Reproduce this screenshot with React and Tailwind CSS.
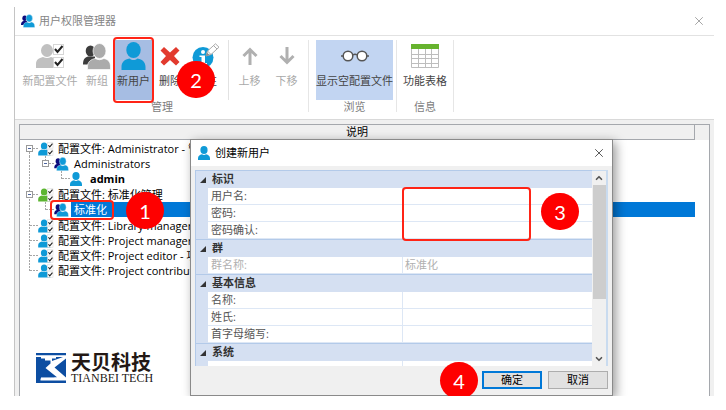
import React from "react";
import { X, ChevronUp, ChevronDown } from "lucide-react";

const BLUE = "#0f9ad7";
const NAVY = "#0b0b7c";

const BODY =
  "M0 28V25C0 20 3 17.500 8 16.500C9.500 17.500 10.500 18 12 18S14.500 17.500 16 16.500C21 17.500 24 20 24 25V28Z";

function Person({ color = BLUE, className }) {
  return (
    <svg viewBox="0 0 24 28" className={className} fill={color} aria-hidden="true">
      <ellipse cx="12" cy="8" rx="7.200" ry="8" />
      <path d={BODY} />
    </svg>
  );
}

function People({ back = NAVY, front = BLUE, className }) {
  return (
    <svg viewBox="0 0 28 27" className={className} aria-hidden="true">
      <g fill={back}>
        <ellipse cx="7.500" cy="8" rx="4.800" ry="5.500" />
        <path d="M0 21.500C0 16.500 1.500 14.500 5 13.500H12V21.500Z" />
      </g>
      <g fill={front} stroke="#fff" strokeWidth="0.700">
        <path d="M4.500 26.500V24C4.500 18.500 8 16.500 12 15.500Q16.500 18 21 15.500C25 16.500 27.500 18.500 27.500 24V26.500Z" />
        <ellipse cx="16.500" cy="8" rx="6.500" ry="7.500" />
      </g>
    </svg>
  );
}

function Profile({ color = BLUE, className }) {
  return (
    <svg viewBox="0 0 29 26" className={className} aria-hidden="true">
      <g fill={color}>
        <ellipse cx="11" cy="7.500" rx="6" ry="6.500" />
        <path d="M0 25V21C0 16.500 3 15 7 14Q11 16 15 14C19 15 23 16.500 23 21V25Z" />
      </g>
      <g fill="#fff" stroke="#d6d6d6">
        <rect x="17.500" y="1.500" width="10" height="10" />
        <rect x="17.500" y="14.500" width="10" height="10" />
      </g>
      <g fill="none" stroke="#222" strokeWidth="2">
        <path d="M19 6L21.500 9L26.500 3M19 19L21.500 22L26.500 16" />
      </g>
    </svg>
  );
}

function DeleteIcon() {
  return (
    <svg viewBox="0 0 20 20" className="h-5 w-5" aria-hidden="true">
      <path d="M4 1L10 6.500L16 1L19.500 4.500L14 10L19.500 16L16 19.500L10 14L4 19.500L0.500 16L6 10L0.500 4.500Z" fill="#e23a2e" />
    </svg>
  );
}

function InfoIcon() {
  return (
    <svg viewBox="0 0 28 26" className="h-[26px] w-7 shrink-0" aria-hidden="true">
      <circle cx="11" cy="14.500" r="10.500" fill={BLUE} />
      <circle cx="11" cy="9" r="2" fill="#fff" />
      <path d="M7.500 12.500H13V20H15V21.500H7.500V20H9.500V14H7.500Z" fill="#fff" />
      <path d="M14 13L15.500 8L23.500 0.800L27 4.200L19 11.500Z" fill="#fff" stroke="#aaa" />
      <path d="M14 13L15 9.500L17.500 12Z" fill="#888" />
      <path d="M21.500 2.500L25 6M15.500 8L19 11.500" stroke="#aaa" />
    </svg>
  );
}

function ArrowIcon({ down }) {
  return (
    <svg viewBox="0 0 16 18" className="h-[18px] w-4" fill="none" stroke="#b0b0b0" strokeWidth="3" aria-hidden="true">
      {down ? <path d="M8 0V15M1.500 9L8 15.500L14.500 9" /> : <path d="M8 18V3M1.500 9L8 2.500L14.500 9" />}
    </svg>
  );
}

function GlassesIcon() {
  return (
    <svg viewBox="0 0 28 12" className="h-3 w-7" fill="none" stroke="#555" strokeWidth="1.500" aria-hidden="true">
      <circle cx="7" cy="6" r="4.800" fill="#fff" />
      <circle cx="21" cy="6" r="4.800" fill="#fff" />
      <path d="M12 5Q14 3.500 16 5M2 6H0M26 6H28" />
    </svg>
  );
}

function TableIcon() {
  return (
    <svg viewBox="0 0 28 24" className="h-6 w-7" aria-hidden="true">
      <rect width="28" height="24" fill="#fff" />
      <path d="M0.500 5V23.500H27.500V5M0 10.500H28M0 14.500H28M0 19.500H28M7.500 5V24M14.500 5V24M20.500 5V24" fill="none" stroke="#bdbdbd" />
      <rect width="28" height="5" fill="#66b32e" />
    </svg>
  );
}

function Badge({ n, className }) {
  return (
    <span
      className={`absolute z-20 flex h-[37px] w-[38px] items-center justify-center rounded-full bg-[#fe0000] font-[Lato,sans-serif] text-[20px] leading-none font-normal text-white ${className}`}
    >
      {n}
    </span>
  );
}

function Highlight({ className }) {
  return <span className={`pointer-events-none absolute z-10 rounded-sm border-2 border-[#ff2416] ${className}`} />;
}

function Tool({ icon, label, className = "", text = "text-[#a9a9a9]", children }) {
  return (
    <button type="button" className={`relative flex h-[60px] flex-col items-center ${text} ${className}`}>
      <span className="flex h-8 items-center justify-center">{icon}</span>
      <span className="leading-[18px] whitespace-nowrap">{label}</span>
      {children}
    </button>
  );
}

function ToolGroup({ label, className = "", children }) {
  return (
    <div className={`flex flex-col items-center ${className}`}>
      <div className="flex">{children}</div>
      <span className="leading-[14px] text-[#7d7d7d]">{label}</span>
    </div>
  );
}

function Divider() {
  return <div className="h-[72px] w-px bg-[#e6e6e6]" />;
}

const LINES = {
  first: "M7.500 8V15M11 7.500H16",
  box: "M7.500 0V15M11 7.500H16",
  open: "M7.500 0V4M11 7.500H16",
  trunk: "M7.500 0V15",
  tee: "M7.500 0V15M8 7.500H16",
  end: "M7.500 0V8M8 7.500H16",
};

function Branch({ kind }) {
  const expandable = kind === "first" || kind === "box" || kind === "open";
  return (
    <svg viewBox="0 0 16 15" className="h-[15px] w-4 shrink-0" fill="none" stroke="#a5a5a5" aria-hidden="true">
      <path d={LINES[kind]} strokeDasharray="2 1" />
      {expandable && (
        <>
          <rect x="4.500" y="4.500" width="6" height="6" fill="#fff" stroke="#9a9a9a" />
          <path d="M6 7.500H9" stroke="#4c64a0" />
        </>
      )}
    </svg>
  );
}

function TreeRow({ gutter, icon, label, selected, bold, children }) {
  return (
    <li className="relative flex h-[15px] items-center">
      {gutter.map((k, i) => (k ? <Branch key={i} kind={k} /> : <span key={i} className="w-4 shrink-0" />))}
      <span className="flex w-[17px] shrink-0">{icon}</span>
      <span
        className={`h-[15px] pl-[3px] leading-[15px] whitespace-nowrap ${bold ? "font-bold" : ""} ${
          selected ? "flex-1 bg-[#0078d7] text-white" : ""
        }`}
      >
        {label}
      </span>
      {children}
    </li>
  );
}

const profileIcon = <Profile className="h-3.5 w-4" />;
const peopleIcon = <People className="h-3.5 w-[15px]" />;

function ProfileTree() {
  return (
    <div className="flex flex-col gap-px pt-px pl-0.5 text-black">
      <ul>
        <TreeRow gutter={["first"]} icon={profileIcon} label="配置文件: Administrator - 管" />
        <TreeRow gutter={["trunk", "open"]} icon={peopleIcon} label="Administrators" />
        <TreeRow gutter={["trunk", "", "end"]} icon={<Person className="h-3.5 w-3" />} label="admin" bold />
      </ul>
      <ul>
        <TreeRow
          gutter={["box"]}
          icon={<Profile color="#5cb531" className="h-3.5 w-4" />}
          label="配置文件: 标准化管理"
        />
        <TreeRow gutter={["trunk", "end"]} icon={peopleIcon} label="标准化" selected>
          <Highlight className="-top-0.5 left-7 h-5 w-[64px]" />
          <Badge n="1" className="-top-2.5 left-[104px]" />
        </TreeRow>
      </ul>
      <ul>
        <TreeRow gutter={["tee"]} icon={profileIcon} label="配置文件: Library manager" />
        <TreeRow gutter={["tee"]} icon={profileIcon} label="配置文件: Project manager" />
        <TreeRow gutter={["tee"]} icon={profileIcon} label="配置文件: Project editor - 项" />
        <TreeRow gutter={["end"]} icon={profileIcon} label="配置文件: Project contribut" />
      </ul>
    </div>
  );
}

function Logo() {
  return (
    <div className="mt-auto mb-3 flex items-center gap-[5px] pl-4 text-[#231815]">
      <svg viewBox="0 0 30 30" className="h-[30px] w-[30px]" role="img" aria-label="天贝科技">
        <path d="M0 0H30V2.200H0ZM0 4H30V25.500H0ZM0 25H4.500V30H0ZM0 27.500H30V30H0Z" fill="#0d4ea2" />
        <path d="M5 4H20V5.500H16V8L27 4H30V5.500L18.500 14.500L30 24.500V26H5V24.200H21L9.500 15L14.500 10.500V7.500H9V5.500H5Z" fill="#fff" />
        <path d="M9.500 17L18.500 24.200H5V14Z" fill="#0d4ea2" />
      </svg>
      <div className="flex flex-col">
        <span className="font-['Noto_Sans_CJK_SC',sans-serif] text-xl leading-5 font-bold">天贝科技</span>
        <span className="font-['Liberation_Serif',serif] text-xs leading-3">TIANBEI TECH</span>
      </div>
    </div>
  );
}

function Section({ title, children }) {
  return (
    <section>
      <button
        type="button"
        className="flex h-[18px] w-full items-center gap-1.5 border-t border-[#b3cae9] bg-[#d5e0f2] pl-1 font-bold text-[#333]"
      >
        <svg viewBox="0 0 6 6" className="h-1.5 w-1.5" aria-hidden="true">
          <path d="M6 0V6H0Z" fill="#333" />
        </svg>
        {title}
      </button>
      {children}
    </section>
  );
}

function Field({ id, label, value = "", disabled }) {
  return (
    <div className="flex h-[17px] border-b border-[#dde7f5] bg-white">
      <div className="-mb-px w-3 bg-[#d5e0f2]" />
      <label htmlFor={id} className={`w-[194px] pl-[3px] leading-4 ${disabled ? "text-[#b0b0b0]" : "text-[#555]"}`}>
        {label}
      </label>
      <input
        id={id}
        defaultValue={value}
        disabled={disabled}
        className="w-0 flex-1 border-l border-[#dde7f5] pl-0.5 leading-4 text-[#555] outline-none disabled:text-[#b0b0b0]"
      />
    </div>
  );
}

function NewUserDialog() {
  return (
    <div
      role="dialog"
      aria-label="创建新用户"
      className="absolute top-[14px] left-[170px] z-10 flex w-[423px] flex-col border border-[#8a8a8a] bg-[#f0f0f0] shadow-[3px_3px_10px_rgba(0,0,0,0.4)]"
    >
      <div className="flex h-[26px] items-center gap-1 bg-white px-1.5 text-black">
        <Person className="h-3.5 w-3.5" />
        <span className="flex-1">创建新用户</span>
        <button type="button" aria-label="关闭">
          <X className="h-3.5 w-3.5" strokeWidth={1.5} color="#444" />
        </button>
      </div>
      <div className="relative mx-1 mt-1 flex h-[196px]">
        <div className="flex-1 overflow-hidden border-l border-[#b3cae9]">
          <Section title="标识">
            <Field id="user" label="用户名:" />
            <Field id="pass" label="密码:" />
            <Field id="pass2" label="密码确认:" />
          </Section>
          <Section title="群">
            <Field id="group" label="群名称:" value="标准化" disabled />
          </Section>
          <Section title="基本信息">
            <Field id="first" label="名称:" />
            <Field id="last" label="姓氏:" />
            <Field id="initials" label="首字母缩写:" />
          </Section>
          <Section title="系统">
            <Field id="system" label="" />
          </Section>
        </div>
        <div className="flex w-4 flex-col items-center border-t border-r-2 border-[#c9dbef] bg-[#f0f0f0]">
          <button type="button" aria-label="向上" className="flex h-3.5 items-center">
            <ChevronUp className="h-2.5 w-2.5" strokeWidth={4} color="#555" />
          </button>
          <div className="h-[114px] w-[13px] bg-[#cdcdcd]" />
          <button type="button" aria-label="向下" className="mt-auto flex h-3.5 items-center">
            <ChevronDown className="h-2.5 w-2.5" strokeWidth={4} color="#555" />
          </button>
        </div>
        <Highlight className="top-[17px] left-[207px] h-[54px] w-[129px]" />
        <Badge n="3" className="top-[23px] left-[346px]" />
      </div>
      <div className="relative flex justify-end gap-1.5 px-1 pt-[5px] pb-1.5 text-black">
        <Badge n="4" className="-top-1 right-[134px]" />
        <button type="button" className="h-[18px] w-[60px] border-2 border-[#0078d7] bg-[#e1e1e1] leading-[14px]">
          确定
        </button>
        <button type="button" className="h-[18px] w-[60px] border border-[#adadad] bg-[#e1e1e1] leading-4">
          取消
        </button>
      </div>
    </div>
  );
}

export default function App() {
  return (
    <div className="flex min-h-screen flex-col bg-white pr-3 pb-3.5 pl-3.5 font-['Open_Sans','Noto_Sans_CJK_SC',sans-serif] text-[11px]">
      <div className="mt-[7px] flex flex-1 flex-col border-l border-[#c4c4c4]">
        <header className="flex h-[29px] items-center gap-1 border-b border-[#e2e2e2] pr-2 pl-1.5 text-[#858585]">
          <People className="h-3.5 w-3.5" />
          <h1 className="flex-1">用户权限管理器</h1>
          <button type="button" aria-label="关闭窗口">
            <X className="h-3.5 w-3.5" strokeWidth={1.5} color="#999" />
          </button>
        </header>

        <div className="flex h-[84px] border-b border-[#d9d9d9] pt-1 pl-1">
          <ToolGroup label="管理">
            <Tool className="w-[62px]" label="新配置文件" icon={<Profile color="#c0c0c0" className="h-[26px] w-[29px]" />} />
            <Tool className="w-8" label="新组" icon={<People back="#3c3c3c" front="#ababab" className="h-[27px] w-7" />} />
            <Tool
              className="w-[41px] bg-[#a6bde3]"
              text="text-[#444]"
              label="新用户"
              icon={<Person className="h-7 w-[25px]" />}
            >
              <Highlight className="-top-[3px] left-0 h-[66px] w-[41px]" />
            </Tool>
            <Tool className="w-8" text="text-[#444]" label="删除" icon={<DeleteIcon />}>
              <Badge n="2" className="top-[21px] left-[23px]" />
            </Tool>
            <Tool className="w-10" text="text-[#444]" label="属性" icon={<InfoIcon />} />
            <div className="mx-0.5 w-px bg-[#e2e2e2]" />
            <Tool className="w-[37px]" label="上移" icon={<ArrowIcon />} />
            <Tool className="w-[37px]" label="下移" icon={<ArrowIcon down />} />
          </ToolGroup>
          <div className="ml-[3px]">
            <Divider />
          </div>
          <ToolGroup label="浏览" className="mr-[3px] ml-[7px]">
            <Tool className="w-[77px] bg-[#c2d5f2]" text="text-[#444]" label="显示空配置文件" icon={<GlassesIcon />} />
          </ToolGroup>
          <Divider />
          <ToolGroup label="信息">
            <Tool className="w-[56px]" text="text-[#444]" label="功能表格" icon={<TableIcon />} />
          </ToolGroup>
          <Divider />
        </div>

        <div className="flex flex-1 flex-col bg-[#f0f0f0] px-1 pt-1">
          <main className="relative flex flex-1 flex-col border border-b-0 border-[#a5a8ad] bg-white [clip-path:inset(0)]">
            <div className="flex h-[15px] bg-[#f0f0f0] pr-3.5">
              <div className="flex-1 border-r border-b border-[#a5a8ad] text-center leading-[14px] text-black">说明</div>
            </div>
            <div className="pr-3.5">
              <ProfileTree />
            </div>
            <Logo />
            <NewUserDialog />
          </main>
        </div>
      </div>
    </div>
  );
}
